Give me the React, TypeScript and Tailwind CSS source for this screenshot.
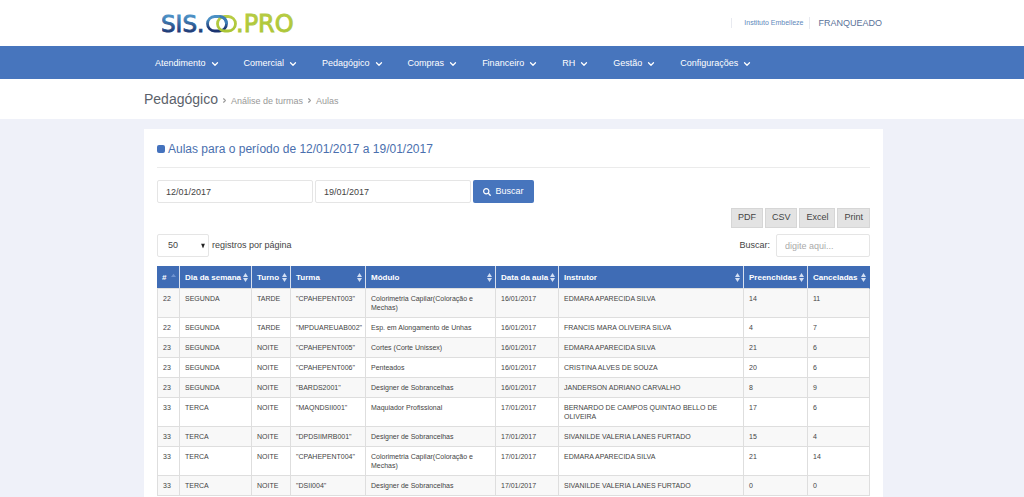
import { ChevronDown, ChevronRight } from 'lucide-react';
import { FaSearch } from 'react-icons/fa';

const menu = ['Atendimento', 'Comercial', 'Pedagógico', 'Compras', 'Financeiro', 'RH', 'Gestão', 'Configurações'];

const columns = [
  { label: '#', width: 'w-[23px]' },
  { label: 'Dia da semana', width: 'w-[72px]' },
  { label: 'Turno', width: 'w-[39px]' },
  { label: 'Turma', width: 'w-[75px]' },
  { label: 'Módulo', width: 'w-[130px]' },
  { label: 'Data da aula', width: 'w-[63px]' },
  { label: 'Instrutor', width: 'w-[185px]' },
  { label: 'Preenchidas', width: 'w-[64px]' },
  { label: 'Canceladas', width: 'w-[62px]' },
];

const rows = [
  ['22', 'SEGUNDA', 'TARDE', '"CPAHEPENT003"', 'Colorimetria Capilar(Coloração e Mechas)', '16/01/2017', 'EDMARA APARECIDA SILVA', '14', '11'],
  ['22', 'SEGUNDA', 'TARDE', '"MPDUAREUAB002"', 'Esp. em Alongamento de Unhas', '16/01/2017', 'FRANCIS MARA OLIVEIRA SILVA', '4', '7'],
  ['23', 'SEGUNDA', 'NOITE', '"CPAHEPENT005"', 'Cortes (Corte Unissex)', '16/01/2017', 'EDMARA APARECIDA SILVA', '21', '6'],
  ['23', 'SEGUNDA', 'NOITE', '"CPAHEPENT006"', 'Penteados', '16/01/2017', 'CRISTINA ALVES DE SOUZA', '20', '6'],
  ['23', 'SEGUNDA', 'NOITE', '"BARDS2001"', 'Designer de Sobrancelhas', '16/01/2017', 'JANDERSON ADRIANO CARVALHO', '8', '9'],
  ['33', 'TERCA', 'NOITE', '"MAQNDSII001"', 'Maquiador Profissional', '17/01/2017', 'BERNARDO DE CAMPOS QUINTAO BELLO DE OLIVEIRA', '17', '6'],
  ['33', 'TERCA', 'NOITE', '"DPDSIIMRB001"', 'Designer de Sobrancelhas', '17/01/2017', 'SIVANILDE VALERIA LANES FURTADO', '15', '4'],
  ['33', 'TERCA', 'NOITE', '"CPAHEPENT004"', 'Colorimetria Capilar(Coloração e Mechas)', '17/01/2017', 'EDMARA APARECIDA SILVA', '21', '14'],
  ['33', 'TERCA', 'NOITE', '"DSII004"', 'Designer de Sobrancelhas', '17/01/2017', 'SIVANILDE VALERIA LANES FURTADO', '0', '0'],
];

const container = 'mx-auto w-full max-w-[739px]';

function Logo() {
  return (
    <svg width="144" height="34" viewBox="0 0 144 34" role="img" aria-label="SIS.OO.PRO">
      <defs>
        <linearGradient id="blue" x1="0" y1="0" x2="0" y2="1">
          <stop offset="0.2" stopColor="#4a8fc4" />
          <stop offset="0.85" stopColor="#1b3470" />
        </linearGradient>
        <linearGradient id="green" x1="0" y1="0" x2="0" y2="1">
          <stop offset="0" stopColor="#b8cc45" />
          <stop offset="1" stopColor="#aac535" />
        </linearGradient>
      </defs>
      <text x="-1" y="26" fontSize="23" fontFamily="DejaVu Sans, sans-serif" fill="url(#blue)" stroke="url(#blue)" strokeWidth="0.9">SIS.</text>
      <rect x="45.500" y="10.500" width="19" height="14.500" rx="7.250" fill="none" stroke="url(#blue)" strokeWidth="2.8" />
      <rect x="55.500" y="10.500" width="18" height="14.500" rx="7.250" fill="none" stroke="url(#green)" strokeWidth="2.8" />
      <path d="M57.500 10.500Q64.500 11 64.500 18" fill="none" stroke="#3d7db6" strokeWidth="2.8" />
      <text x="74" y="26" fontSize="24" fontFamily="DejaVu Sans, sans-serif" fill="url(#green)" stroke="url(#green)" strokeWidth="0.9">.PRO</text>
    </svg>
  );
}

function SortIcon({ first }: { first: boolean }) {
  return first ? (
    <svg width="5" height="9" viewBox="0 0 6 9" className="shrink-0" aria-hidden="true">
      <path d="M3 0L6 4H0z" fill="#6f93d0" />
    </svg>
  ) : (
    <svg width="5" height="9" viewBox="0 0 5 9" className="shrink-0" aria-hidden="true">
      <path d="M2.500 0L5 4H0zM2.500 9L0 5H5z" fill="#d3dff3" />
    </svg>
  );
}

export default function App() {
  return (
    <div className="min-h-screen bg-[#eff1f9] font-['Liberation_Sans',Arial,sans-serif] text-[#444]">
      <header className="bg-white pl-[3px]">
        <div className={`${container} flex h-[46px] items-center justify-between pr-px pl-[18px]`}>
          <a href="#inicio"><Logo /></a>
          <div className="flex items-center text-[#5a7299]">
            <a href="#instituto" className="border-l border-[#e8eaf0] pl-3 text-[7px] text-[#6089bb]">Instituto Embelleze</a>
            <a href="#perfil" className="ml-1.5 border-l border-[#e8eaf0] pl-2 text-[9px] leading-3">FRANQUEADO</a>
          </div>
        </div>
      </header>

      <nav className="bg-[#4775bd] pl-[3px]">
        <ul className={`${container} flex h-[33px] items-center gap-6 pt-0.5 pl-[11px]`}>
          {menu.map((item) => (
            <li key={item}>
              <a href="#menu" className="flex items-center gap-1 text-[9px] whitespace-nowrap text-white">
                {item}
                <ChevronDown size={10} strokeWidth={3} />
              </a>
            </li>
          ))}
        </ul>
      </nav>

      <div className="bg-white pl-[3px]">
        <div className={`${container} flex h-10 items-baseline gap-[3px] pt-2.5 text-[9px] text-[#999]`}>
          <h1 className="text-[14px] leading-5 text-[#5b626b]">Pedagógico</h1>
          <ChevronRight size={7} strokeWidth={4} />
          <a href="#analise">Análise de turmas</a>
          <ChevronRight size={7} strokeWidth={4} />
          <span>Aulas</span>
        </div>
      </div>

      <div className="pt-2.5 pl-[3px]">
        <main className={`${container} bg-white px-[13px] pb-4`}>
          <h2 className="flex h-[39px] items-center gap-[3px] border-b border-[#ebebeb] pt-0.5 text-[12px] text-[#4a6fae]">
            <span className="size-2 rounded-xs bg-[#4472bd]" />
            Aulas para o período de 12/01/2017 a 19/01/2017
          </h2>

          <form className="flex gap-0.5 pt-3" onSubmit={(e) => e.preventDefault()}>
            <input aria-label="Data inicial" defaultValue="12/01/2017" className="h-[23px] w-[156px] rounded-xs border border-[#e5e5e5] px-2 text-[9px]" />
            <input aria-label="Data final" defaultValue="19/01/2017" className="h-[23px] w-[156px] rounded-xs border border-[#e5e5e5] px-2 text-[9px]" />
            <button type="submit" className="flex h-[23px] w-[61px] items-center justify-center gap-1 rounded-xs bg-[#4775bd] text-[9px] text-white">
              <FaSearch size={8} />
              Buscar
            </button>
          </form>

          <div className="flex justify-end gap-0.5 pt-[5px]">
            {['PDF', 'CSV', 'Excel', 'Print'].map((label) => (
              <button key={label} type="button" className="h-5 border border-[#d6d6d6] bg-[#e3e3e3] px-1.5 text-[9px]">
                {label}
              </button>
            ))}
          </div>

          <div className="flex items-center justify-between pt-1.5 pb-[9px] text-[9px]">
            <label className="flex items-center gap-[3px]">
              <span className="relative">
                <select defaultValue="50" className="h-[23px] w-[52px] appearance-none rounded-xs border border-[#e5e5e5] pl-2.5">
                  <option>50</option>
                </select>
                <svg width="4" height="5" viewBox="0 0 4 5" className="pointer-events-none absolute top-1/2 right-1 -translate-y-1/2" aria-hidden="true">
                  <path d="M0 0H4L2 5z" fill="#222" />
                </svg>
              </span>
              registros por página
            </label>
            <label className="flex items-center gap-1.5">
              Buscar:
              <input placeholder="digite aqui..." className="h-[23px] w-[94px] rounded-xs border border-[#e5e5e5] px-2 placeholder:text-[#aaa]" />
            </label>
          </div>

          <table className="w-full table-fixed border-separate border-spacing-0 text-left text-[7px] leading-[9px] text-[#444]">
            <thead>
              <tr className="h-[23px] bg-[#3f6cb5] text-[8px] text-white">
                {columns.map((c, i) => (
                  <th key={c.label} className={`${c.width} border-r border-b border-r-[#d8e0ee] border-b-[#dedede] pr-[3px] pl-[5px] last:border-r-[#3f6cb5]`}>
                    <span className="flex items-center justify-between whitespace-nowrap">
                      {c.label}
                      <SortIcon first={i === 0} />
                    </span>
                  </th>
                ))}
              </tr>
            </thead>
            <tbody>
              {rows.map((row) => (
                <tr key={row[3] + row[5]} className="odd:bg-[#f8f8f8]">
                  {row.map((cell, i) => (
                    <td key={columns[i].label} className="border-r border-b border-[#dedede] py-[5px] pr-3 pl-[5px] align-top first:border-l nth-4:pr-0">
                      {cell}
                    </td>
                  ))}
                </tr>
              ))}
            </tbody>
          </table>
        </main>
      </div>
    </div>
  );
}
